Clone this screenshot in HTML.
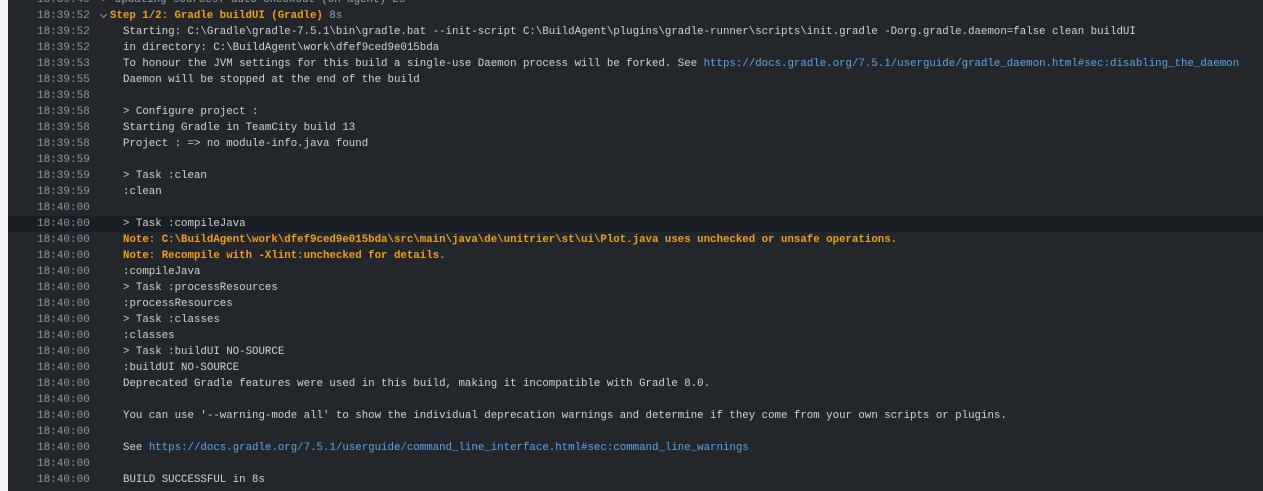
<!DOCTYPE html>
<html><head><meta charset="utf-8"><style>
html,body{margin:0;padding:0;width:1263px;height:491px;overflow:hidden;background:#23272b;}
body{position:relative;font-family:"Liberation Mono",monospace;font-size:10.75px;}
.strip{position:absolute;left:0;top:0;width:8px;height:491px;background:#f4f5f6;}
.row{position:absolute;left:8px;right:0;height:16px;line-height:17px;white-space:pre;color:#cfd3d6;}
.row.hl{background:#1a1e24;}
.ts{position:absolute;left:29px;color:#8a98a3;font-size:11px;}
.tx{position:absolute;left:115px;}
.step{position:absolute;left:102px;color:#f29d1b;font-weight:bold;}
.step .d{color:#9aa5ad;font-weight:normal;}
.chev{position:absolute;left:93px;top:4px;width:4px;height:4px;border-right:1.3px solid #8a98a3;border-bottom:1.3px solid #8a98a3;transform:rotate(45deg);}
.o{color:#f29d1b;font-weight:bold;}
a{color:#5aa6ec;text-decoration:none;}
</style></head><body>
<div class="strip"></div>
<div class="row" style="top:-8px"><span class="ts">18:39:49</span><span class="tx" style="left:94px;color:#9aa5ad">&gt; Updating sources: auto checkout (on agent) 2s</span></div>
<div class="row" style="top:8px"><span class="ts">18:39:52</span><span class="chev"></span><span class="step">Step 1/2: Gradle buildUI (Gradle) <span class="d">8s</span></span></div>
<div class="row" style="top:24px"><span class="ts">18:39:52</span><span class="tx">Starting: C:\Gradle\gradle-7.5.1\bin\gradle.bat --init-script C:\BuildAgent\plugins\gradle-runner\scripts\init.gradle -Dorg.gradle.daemon=false clean buildUI</span></div>
<div class="row" style="top:40px"><span class="ts">18:39:52</span><span class="tx">in directory: C:\BuildAgent\work\dfef9ced9e015bda</span></div>
<div class="row" style="top:56px"><span class="ts">18:39:53</span><span class="tx">To honour the JVM settings for this build a single-use Daemon process will be forked. See <a>https://docs.gradle.org/7.5.1/userguide/gradle_daemon.html#sec:disabling_the_daemon</a></span></div>
<div class="row" style="top:72px"><span class="ts">18:39:55</span><span class="tx">Daemon will be stopped at the end of the build</span></div>
<div class="row" style="top:88px"><span class="ts">18:39:58</span></div>
<div class="row" style="top:104px"><span class="ts">18:39:58</span><span class="tx">&gt; Configure project :</span></div>
<div class="row" style="top:120px"><span class="ts">18:39:58</span><span class="tx">Starting Gradle in TeamCity build 13</span></div>
<div class="row" style="top:136px"><span class="ts">18:39:58</span><span class="tx">Project : =&gt; no module-info.java found</span></div>
<div class="row" style="top:152px"><span class="ts">18:39:59</span></div>
<div class="row" style="top:168px"><span class="ts">18:39:59</span><span class="tx">&gt; Task :clean</span></div>
<div class="row" style="top:184px"><span class="ts">18:39:59</span><span class="tx">:clean</span></div>
<div class="row" style="top:200px"><span class="ts">18:40:00</span></div>
<div class="row hl" style="top:216px"><span class="ts">18:40:00</span><span class="tx">&gt; Task :compileJava</span></div>
<div class="row" style="top:232px"><span class="ts">18:40:00</span><span class="tx o">Note: C:\BuildAgent\work\dfef9ced9e015bda\src\main\java\de\unitrier\st\ui\Plot.java uses unchecked or unsafe operations.</span></div>
<div class="row" style="top:248px"><span class="ts">18:40:00</span><span class="tx o">Note: Recompile with -Xlint:unchecked for details.</span></div>
<div class="row" style="top:264px"><span class="ts">18:40:00</span><span class="tx">:compileJava</span></div>
<div class="row" style="top:280px"><span class="ts">18:40:00</span><span class="tx">&gt; Task :processResources</span></div>
<div class="row" style="top:296px"><span class="ts">18:40:00</span><span class="tx">:processResources</span></div>
<div class="row" style="top:312px"><span class="ts">18:40:00</span><span class="tx">&gt; Task :classes</span></div>
<div class="row" style="top:328px"><span class="ts">18:40:00</span><span class="tx">:classes</span></div>
<div class="row" style="top:344px"><span class="ts">18:40:00</span><span class="tx">&gt; Task :buildUI NO-SOURCE</span></div>
<div class="row" style="top:360px"><span class="ts">18:40:00</span><span class="tx">:buildUI NO-SOURCE</span></div>
<div class="row" style="top:376px"><span class="ts">18:40:00</span><span class="tx">Deprecated Gradle features were used in this build, making it incompatible with Gradle 8.0.</span></div>
<div class="row" style="top:392px"><span class="ts">18:40:00</span></div>
<div class="row" style="top:408px"><span class="ts">18:40:00</span><span class="tx">You can use '--warning-mode all' to show the individual deprecation warnings and determine if they come from your own scripts or plugins.</span></div>
<div class="row" style="top:424px"><span class="ts">18:40:00</span></div>
<div class="row" style="top:440px"><span class="ts">18:40:00</span><span class="tx">See <a>https://docs.gradle.org/7.5.1/userguide/command_line_interface.html#sec:command_line_warnings</a></span></div>
<div class="row" style="top:456px"><span class="ts">18:40:00</span></div>
<div class="row" style="top:472px"><span class="ts">18:40:00</span><span class="tx">BUILD SUCCESSFUL in 8s</span></div>
</body></html>
